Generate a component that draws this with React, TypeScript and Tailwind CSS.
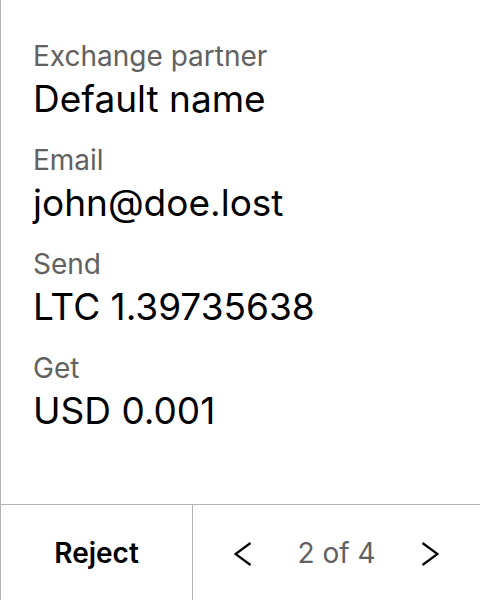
const rows = [
  { label: "Exchange partner", value: "Default name" },
  { label: "Email", value: "john@doe.lost" },
  { label: "Send", value: "LTC 1.39735638" },
  { label: "Get", value: "USD 0.001" },
];

const Chevron = ({ dir }: { dir: "left" | "right" }) => (
  <svg width="18" height="24" viewBox="0 0 18 24" fill="none" stroke="#000" strokeWidth="2.2">
    {dir === "left" ? <polyline points="16.5,1 1.5,12 16.5,23" /> : <polyline points="1.5,1 16.5,12 1.5,23" />}
  </svg>
);

export default function App() {
  return (
    <div className="flex h-screen w-full flex-col border-l border-[#b3b3b3] bg-white font-['Inter',sans-serif]">
      <div className="flex flex-1 flex-col gap-[21px] px-8 pt-[38px]">
        {rows.map((r) => (
          <div key={r.label} className="flex flex-col gap-[3px]">
            <span className="text-[28px] leading-[36px] text-[#616161]">{r.label}</span>
            <span className="text-[37px] leading-[44px] text-black">{r.value}</span>
          </div>
        ))}
      </div>
      <div className="flex h-24 border-t border-[#b3b3b3]">
        <button className="flex w-[192px] items-center justify-center border-r border-[#b3b3b3] text-[28px] font-semibold text-black">
          Reject
        </button>
        <div className="flex flex-1 items-center justify-center gap-[45px]">
          <button className="flex items-center pt-[2px]">
            <Chevron dir="left" />
          </button>
          <span className="text-[28px] text-[#616161]">2 of 4</span>
          <button className="flex items-center pt-[2px]">
            <Chevron dir="right" />
          </button>
        </div>
      </div>
    </div>
  );
}
